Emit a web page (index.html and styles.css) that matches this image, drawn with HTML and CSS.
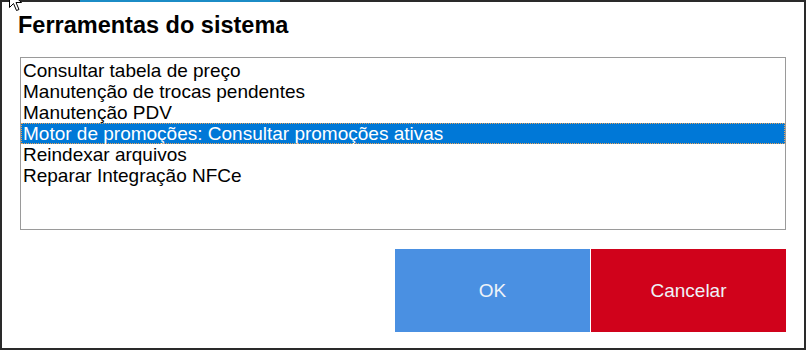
FILE: index.html
```html
<!DOCTYPE html>
<html lang="pt">
<head>
<meta charset="utf-8">
<title>Ferramentas do sistema</title>
<link rel="stylesheet" href="styles.css">
</head>
<body>
<div class="window">
  <div class="topstrip"></div>
  <h1 class="title">Ferramentas do sistema</h1>
  <div class="listbox">
    <div class="item">Consultar tabela de preço</div>
    <div class="item">Manutenção de trocas pendentes</div>
    <div class="item">Manutenção PDV</div>
    <div class="item selected">Motor de promoções: Consultar promoções ativas</div>
    <div class="item">Reindexar arquivos</div>
    <div class="item">Reparar Integração NFCe</div>
  </div>
  <div class="actions">
    <button class="btn btn-ok">OK</button>
    <button class="btn btn-cancel">Cancelar</button>
  </div>
</div>
<svg class="cursor" width="16" height="22" viewBox="0 0 16 22">
  <path d="M1.5 0.5 L1.5 16.5 L5.5 12.5 L8.5 19.5 L11 18.5 L8 11.5 L13.5 11.5 Z" fill="#fff" stroke="#000" stroke-width="1" stroke-linejoin="miter"/>
</svg>
</body>
</html>
```
FILE: styles.css
```css
html, body {
  margin: 0;
  padding: 0;
  background: #fff;
}
body {
  width: 808px;
  height: 351px;
  overflow: hidden;
  position: relative;
  font-family: "Liberation Sans", Arial, sans-serif;
}
.window {
  position: relative;
  width: 806px;
  height: 350px;
  box-sizing: border-box;
  border: 2px solid #2a2a2a;
  background: #fff;
  padding: 11px 18px 16px 18px;
  display: flex;
  flex-direction: column;
}
.topstrip {
  position: absolute;
  left: -2px;
  right: -2px;
  top: -2px;
  height: 2px;
  background: linear-gradient(to right, #2a2a2a 0, #2a2a2a 80px, #1b8cc6 80px, #1b8cc6 280px, #2a2a2a 280px);
}
.title {
  margin: 0 0 0 -2px;
  padding: 0;
  font-size: 23.5px;
  line-height: 25px;
  font-weight: bold;
  color: #000;
}
.listbox {
  margin-top: 19px;
  height: 174px;
  box-sizing: border-box;
  border: 1px solid #9a9a9a;
  padding: 2px 0 0 0;
}
.item {
  height: 21px;
  line-height: 21px;
  font-size: 19px;
  color: #000;
  padding-left: 2px;
  white-space: nowrap;
  box-sizing: border-box;
}
.item.selected {
  background: #0078d7;
  color: #fff;
  outline: 1px dotted #e8a35a;
  outline-offset: -1px;
}
.actions {
  margin-top: 19px;
  display: flex;
  justify-content: flex-end;
  gap: 1px;
}
.btn {
  width: 195px;
  height: 83px;
  border: none;
  margin: 0;
  padding: 0;
  font-family: "Liberation Sans", Arial, sans-serif;
  font-size: 19px;
  color: #eef2f8;
}
.btn-ok {
  background: #4a90e2;
}
.btn-cancel {
  background: #d0021b;
}
.cursor {
  position: absolute;
  left: 8px;
  top: -9px;
}
```
